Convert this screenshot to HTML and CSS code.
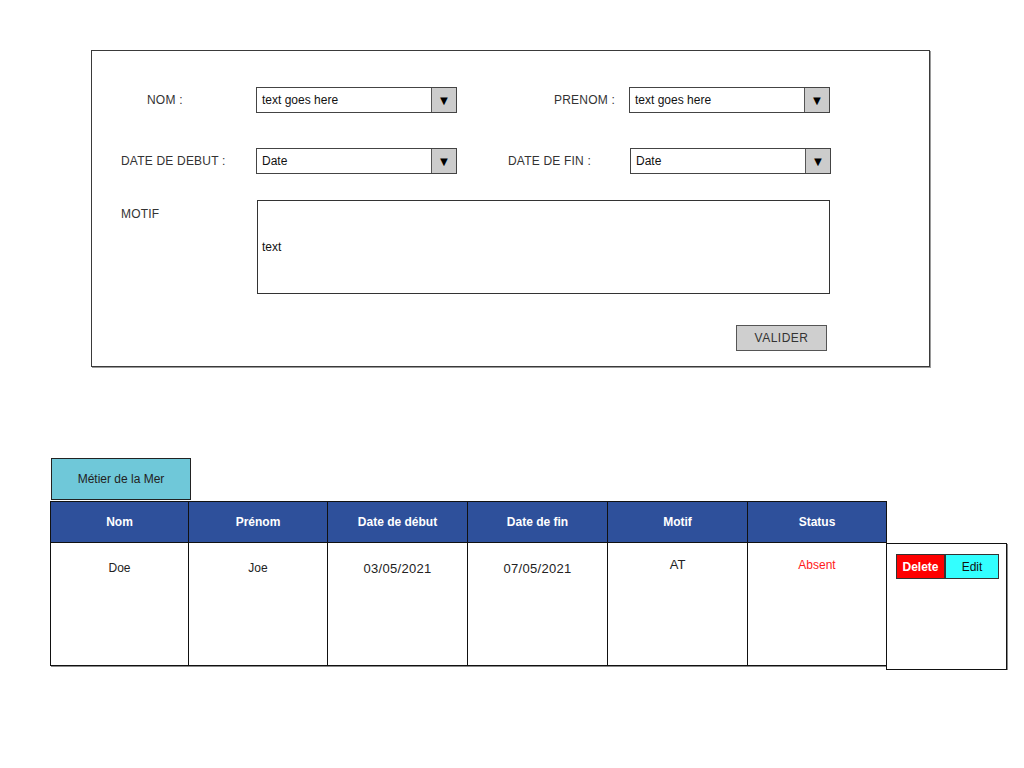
FILE: index.html
```html
<!DOCTYPE html>
<html lang="fr">
<head>
<meta charset="utf-8">
<title>Absences</title>
<link rel="stylesheet" href="styles.css">
</head>
<body>
<div class="page">
  <form class="panel">
    <div class="row">
      <label class="label label-nom">NOM :</label>
      <div class="combo"><span class="combo-text">text goes here</span><span class="combo-btn">&#9660;</span></div>
      <label class="label-right label-prenom">PRENOM :</label>
      <div class="combo"><span class="combo-text">text goes here</span><span class="combo-btn">&#9660;</span></div>
    </div>
    <div class="row row-2">
      <label class="label">DATE DE DEBUT :</label>
      <div class="combo"><span class="combo-text">Date</span><span class="combo-btn">&#9660;</span></div>
      <label class="label-right label-fin">DATE DE FIN :</label>
      <div class="combo combo-fin"><span class="combo-text">Date</span><span class="combo-btn">&#9660;</span></div>
    </div>
    <div class="row row-3">
      <label class="label label-motif">MOTIF</label>
      <div class="textarea">text</div>
    </div>
    <div class="row row-4">
      <button type="button" class="btn-valider">VALIDER</button>
    </div>
  </form>

  <div class="table-wrap">
    <div class="tab">Métier de la Mer</div>
    <div class="table">
      <div class="col col-1">
        <div class="th">Nom</div>
        <div class="td">Doe</div>
      </div>
      <div class="col col-2">
        <div class="th">Prénom</div>
        <div class="td">Joe</div>
      </div>
      <div class="col col-3">
        <div class="th">Date de début</div>
        <div class="td td-date">03/05/2021</div>
      </div>
      <div class="col col-4">
        <div class="th">Date de fin</div>
        <div class="td td-date">07/05/2021</div>
      </div>
      <div class="col col-5">
        <div class="th">Motif</div>
        <div class="td td-motif">AT</div>
      </div>
      <div class="col col-6">
        <div class="th">Status</div>
        <div class="td td-status">Absent</div>
      </div>
      <div class="col col-7">
        <div class="th-empty"></div>
        <div class="td td-actions">
          <button type="button" class="btn-delete">Delete</button><button type="button" class="btn-edit">Edit</button>
        </div>
      </div>
    </div>
  </div>
</div>
</body>
</html>
```
FILE: styles.css
```css
* { box-sizing: border-box; }

html, body {
  margin: 0;
  padding: 0;
  background: #ffffff;
}

body {
  font-family: "Liberation Sans", Arial, sans-serif;
  font-size: 12px;
  color: #222222;
}

.page {
  padding-top: 50px;
}

/* ---------- form panel ---------- */
.panel {
  margin: 0 0 0 91px;
  width: 839px;
  height: 317px;
  border: 1px solid #3a3a3a;
  padding: 36px 0 0 29px;
  box-shadow: 1px 1px 0 #9a9a9a;
}

.row {
  display: flex;
  align-items: center;
}

.row-2 { margin-top: 35px; }
.row-3 { margin-top: 26px; align-items: flex-start; }
.row-4 { margin-top: 31px; }

.label {
  width: 135px;
  color: #333333;
  letter-spacing: 0.2px;
}

.label-nom { padding-left: 26px; }
.label-motif { padding-top: 7px; }

.label-right {
  width: 172px;
  color: #333333;
  letter-spacing: 0.2px;
}
.label-prenom { padding-left: 97px; }
.label-fin { padding-left: 51px; }

.combo {
  display: flex;
  width: 201px;
  height: 26px;
  border: 1px solid #444444;
  background: #ffffff;
}
.combo-fin { margin-left: 1px; }

.combo-text {
  flex: 1;
  display: flex;
  align-items: center;
  padding-left: 5px;
  color: #111111;
}

.combo-btn {
  width: 25px;
  border-left: 1px solid #555555;
  background: #cccccc;
  display: flex;
  align-items: center;
  justify-content: center;
  font-size: 13px;
  color: #000000;
}

.textarea {
  margin-left: 1px;
  width: 573px;
  height: 94px;
  border: 1px solid #333333;
  display: flex;
  align-items: center;
  padding-left: 4px;
  color: #111111;
}

.btn-valider {
  margin-left: 615px;
  width: 91px;
  height: 26px;
  border: 1px solid #555555;
  background: #cfcfcf;
  font-family: "Liberation Sans", Arial, sans-serif;
  font-size: 12px;
  color: #333333;
  letter-spacing: 0.5px;
  padding: 0;
}

/* ---------- table ---------- */
.table-wrap {
  margin-top: 91px;
  padding-left: 50px;
}

.tab {
  margin-left: 1px;
  width: 140px;
  height: 42px;
  border: 1px solid #222222;
  background: #6fc8d9;
  display: flex;
  align-items: center;
  justify-content: center;
  color: #222222;
  font-size: 12px;
}

.table {
  display: flex;
  margin-top: 1px;
  align-items: flex-start;
}

.col {
  display: flex;
  flex-direction: column;
  margin-right: -1px;
}

.col-1 { width: 139px; }
.col-2 { width: 140px; }
.col-3 { width: 141px; }
.col-4 { width: 141px; }
.col-5 { width: 141px; }
.col-6 { width: 140px; }
.col-7 { width: 121px; }

.th {
  height: 42px;
  background: #2e509b;
  border: 1px solid #111111;
  color: #ffffff;
  font-weight: bold;
  font-size: 12px;
  display: flex;
  align-items: center;
  justify-content: center;
}

.th-empty {
  height: 42px;
}

.td {
  height: 124px;
  margin-top: -1px;
  border: 1px solid #111111;
  background: #ffffff;
  text-align: center;
  padding-top: 18px;
  font-size: 12px;
  color: #222222;
  box-shadow: 1px 1px 0 #8a8a8a;
}

.td-date {
  font-size: 13px;
  letter-spacing: 0.3px;
}

.td-motif { padding-top: 14px; font-size: 13px; }

.td-status {
  color: #ff1a1a;
  padding-top: 15px;
}

.td-actions {
  margin-top: 0;
  height: 127px;
  text-align: left;
  padding: 10px 0 0 9px;
  display: flex;
  align-items: flex-start;
}

.btn-delete,
.btn-edit {
  height: 25px;
  border: 1px solid #333333;
  font-family: "Liberation Sans", Arial, sans-serif;
  font-size: 12px;
  padding: 0;
}

.btn-delete {
  width: 49px;
  background: #ff0000;
  color: #ffffff;
  font-weight: bold;
}

.btn-edit {
  width: 54px;
  background: #33ffff;
  color: #111111;
}
```
